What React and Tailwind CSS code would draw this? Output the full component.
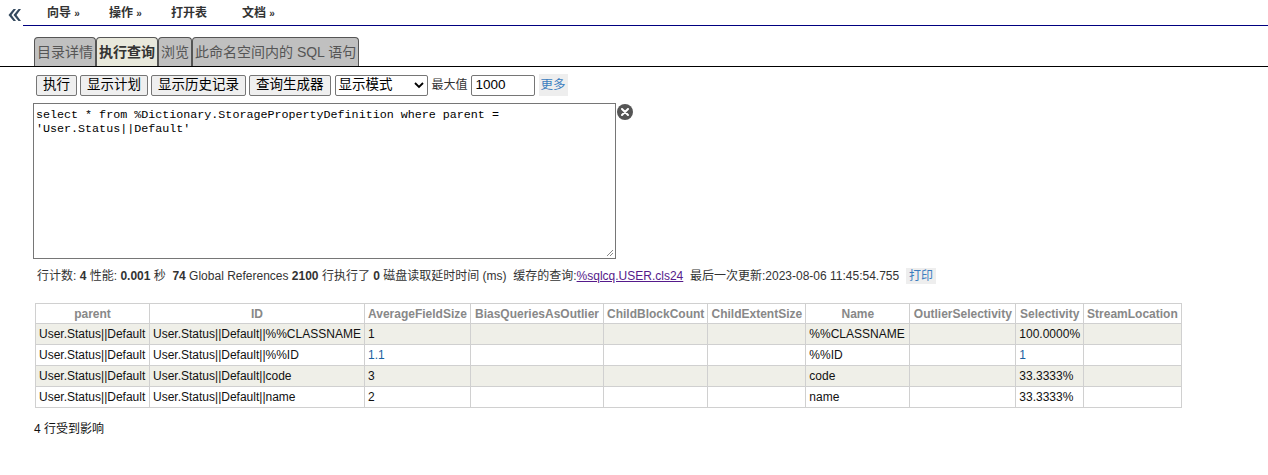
import React from "react";

const cols = [
  { name: "parent", w: "w-[114px]" },
  { name: "ID", w: "w-[215px]" },
  { name: "AverageFieldSize", w: "w-[106px]" },
  { name: "BiasQueriesAsOutlier", w: "w-[133px]" },
  { name: "ChildBlockCount", w: "w-[104px]" },
  { name: "ChildExtentSize", w: "w-[98px]" },
  { name: "Name", w: "w-[104px]" },
  { name: "OutlierSelectivity", w: "w-[106px]" },
  { name: "Selectivity", w: "w-[67px]" },
  { name: "StreamLocation", w: "w-[97px]" },
];

const rows = [
  ["User.Status||Default", "User.Status||Default||%%CLASSNAME", "1", "", "", "", "%%CLASSNAME", "", "100.0000%", ""],
  ["User.Status||Default", "User.Status||Default||%%ID", "1.1", "", "", "", "%%ID", "", "1", ""],
  ["User.Status||Default", "User.Status||Default||code", "3", "", "", "", "code", "", "33.3333%", ""],
  ["User.Status||Default", "User.Status||Default||name", "2", "", "", "", "name", "", "33.3333%", ""],
];

const font = "font-['Liberation_Sans','Noto_Sans_CJK_SC',sans-serif]";

function Btn({ children }) {
  return (
    <button className="h-[21px] px-[6px] bg-[#efefef] border border-[#767676] rounded-[2px] text-[13.5px] text-black leading-none">
      {children}
    </button>
  );
}

function Tab({ children, active }) {
  return (
    <div
      className={`h-[29px] px-[2px] flex items-center border border-[#555] border-b-0 rounded-t-[4px] text-[14px] ${
        active ? "bg-[#e8e8dc] text-[#333] font-bold" : "bg-[#c0c0c0] text-[#555]"
      }`}
    >
      {children}
    </div>
  );
}

export default function App() {
  return (
    <div className={`${font} bg-white w-[1268px] h-[475px] text-[#333]`}>
      {/* top nav */}
      <div className="flex h-[26px]">
        <div className="w-[23px] pt-[9px] pl-[8px]">
          <svg width="13" height="12" viewBox="0 0 13 12">
            <path d="M5.5 0 L0.5 6 L5.5 12 L8 12 L3.5 6 L8 0 Z" fill="#34495e" />
            <path d="M10.5 0 L5.5 6 L10.5 12 L13 12 L8.5 6 L13 0 Z" fill="#34495e" />
          </svg>
        </div>
        <div className="flex-1 border-b border-[#000080] flex items-center pl-[24px] text-[12px] font-bold text-[#333]">
          <span className="w-[62px]">向导 <span className="text-[10px]">»</span></span>
          <span className="w-[62px]">操作 <span className="text-[10px]">»</span></span>
          <span className="w-[71px]">打开表</span>
          <span>文档 <span className="text-[10px]">»</span></span>
        </div>
      </div>

      {/* tabs */}
      <div className="mt-[11px] pl-[34px] flex items-end border-b border-black">
        <Tab>目录详情</Tab>
        <Tab active>执行查询</Tab>
        <Tab>浏览</Tab>
        <Tab>此命名空间内的 SQL 语句</Tab>
      </div>

      {/* toolbar */}
      <div className="mt-[7px] pl-[36px] flex items-center gap-[3px]">
        <Btn>执行</Btn>
        <Btn>显示计划</Btn>
        <Btn>显示历史记录</Btn>
        <Btn>查询生成器</Btn>
        <div className="ml-[1px] h-[21px] w-[93px] border border-[#767676] rounded-[2px] flex items-center justify-between px-[3px] text-[13.5px] text-black">
          <span>显示模式</span>
          <svg width="10" height="7" viewBox="0 0 10 7">
            <path d="M1 1 L5 5 L9 1" stroke="#000" strokeWidth="1.8" fill="none" />
          </svg>
        </div>
        <span className="ml-[1px] text-[12px] text-[#333]">最大值</span>
        <div className="h-[21px] w-[64px] border border-[#767676] rounded-[2px] flex items-center px-[4px] text-[13.5px] text-black">1000</div>
        <span className="ml-[1px] bg-[#eeeeee] h-[22px] flex items-center px-[2px] text-[12.5px] text-[#3b7dbf]">更多</span>
      </div>

      {/* editor */}
      <div className="mt-[7px] pl-[33px] flex items-start">
        <div className="w-[583px] h-[156px] border border-[#767676] pt-[4px] px-[2px] font-['Liberation_Mono',monospace] text-[11.7px] leading-[14px] text-black whitespace-pre relative">
          {"select * from %Dictionary.StoragePropertyDefinition where parent =\n'User.Status||Default'"}
          <svg className="absolute right-[1px] bottom-[1px]" width="9" height="9" viewBox="0 0 9 9">
            <path d="M8 2 L2 8 M8 5 L5 8" stroke="#888" strokeWidth="1" />
          </svg>
        </div>
        <div className="ml-[1px] mt-[1px] w-[16px] h-[16px] rounded-full bg-[#555] flex items-center justify-center">
          <svg width="8" height="8" viewBox="0 0 8 8">
            <path d="M1 1 L7 7 M7 1 L1 7" stroke="#fff" strokeWidth="2" strokeLinecap="round" />
          </svg>
        </div>
      </div>

      {/* stats */}
      <div className="mt-[8px] pl-[37px] text-[12px] text-[#333] flex items-center h-[18px] whitespace-pre">
        <span>行计数: <b>4</b> 性能: <b>0.001</b> 秒  <b>74</b> Global References <b>2100</b> 行执行了 <b>0</b> 磁盘读取延时时间 (ms)  缓存的查询:</span>
        <span className="underline text-[#551a8b]">%sqlcq.USER.cls24</span>
        <span>  最后一次更新:2023-08-06 11:45:54.755  </span>
        <span className="bg-[#eeeeee] text-[#3b7dbf] px-[3px] h-[16px] flex items-center">打印</span>
      </div>

      {/* results */}
      <div className="mt-[18px] pl-[35px]">
        <table className="border-collapse text-[12px] border border-[#d0d0d0]">
          <thead>
            <tr className="h-[20px]">
              {cols.map((c) => (
                <th key={c.name} className={`${c.w} border border-[#d0d0d0] font-bold text-[#888] text-center px-[3px] whitespace-nowrap`}>
                  {c.name}
                </th>
              ))}
            </tr>
          </thead>
          <tbody>
            {rows.map((r, i) => (
              <tr key={i} className={`h-[21px] ${i % 2 === 0 ? "bg-[#efefe8]" : "bg-white"}`}>
                {r.map((v, j) => (
                  <td
                    key={j}
                    className={`border border-[#d0d0d0] px-[3px] whitespace-nowrap ${
                      v === "1.1" || (j === 8 && v === "1") ? "text-[#1a5fa0]" : "text-[#111]"
                    }`}
                  >
                    {v}
                  </td>
                ))}
              </tr>
            ))}
          </tbody>
        </table>
        <div className="mt-[12px] -ml-[1px] text-[12px] text-[#111]">4 行受到影响</div>
      </div>
    </div>
  );
}
